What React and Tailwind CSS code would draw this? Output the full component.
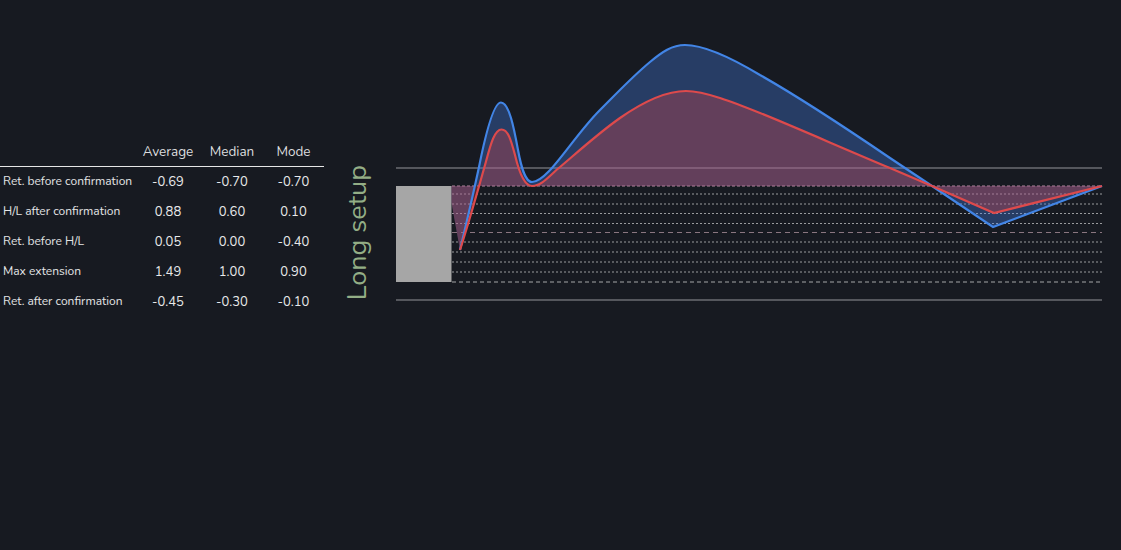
const rows = [
  ["Ret. before confirmation", "-0.69", "-0.70", "-0.70"],
  ["H/L after confirmation", "0.88", "0.60", "0.10"],
  ["Ret. before H/L", "0.05", "0.00", "-0.40"],
  ["Max extension", "1.49", "1.00", "0.90"],
  ["Ret. after confirmation", "-0.45", "-0.30", "-0.10"],
];

const blueCurve =
  "C466 225 473 195 479 167 C484 142 493 102.5 501 102.5 C509 102.5 514 128 518 150 C521 166 525 182 532 182 C548 182 572 138 600 110 C617 93 633 76 650 62 C662 52 672 45 685 45 C705 45 735 60 760 75 C790 92 840 124 890 158 L932 186 L993 227 L1102 186";
const redCurve =
  "C468 225 478 190 485 165 C490 147 494 129.5 501.5 129.5 C508 129.5 511 140 515 155 C519 172 524 186 532 186 C542 186 550 175 560 167 C580 150 600 132 620 118 C640 104 665 91 686 91 C705 91 735 103 760 113 C790 125 840 147 890 168 L932 186 L994 213 L1102 186";

const dotted = [194, 204, 213.5, 223.5, 242, 252, 262, 272];

function Chart() {
  return (
    <svg width="725" height="300" viewBox="390 30 725 300" className="block">
      <line x1="396" x2="1102" y1="168" y2="168" stroke="#6b6d72" strokeWidth="1.5" />
      <line x1="396" x2="1102" y1="300" y2="300" stroke="#6b6d72" strokeWidth="1.5" />
      {dotted.map((y) => (
        <line key={y} x1="452" x2="1102" y1={y} y2={y} stroke="#9a9b9e" strokeWidth="1" strokeDasharray="2 2" />
      ))}
      <line x1="452" x2="1102" y1="186" y2="186" stroke="#b48aa0" strokeWidth="1" strokeDasharray="3 2" />
      <line x1="452" x2="1102" y1="232.5" y2="232.5" stroke="#8a7680" strokeWidth="1" strokeDasharray="5 4" />
      <line x1="452" x2="1102" y1="282" y2="282" stroke="#a5a6a8" strokeWidth="1" strokeDasharray="4 3" />
      <rect x="396" y="186" width="55.5" height="96" fill="#a6a6a6" />
      <path d={`M451.5 186 L451.5 203 L460 250 ${blueCurve} Z`} fill="#4a85f0" fillOpacity="0.33" />
      <path d={`M451.5 186 L451.5 203 L460 250 ${redCurve} Z`} fill="#ef4444" fillOpacity="0.3" />
      <path d={`M460 250 ${blueCurve}`} fill="none" stroke="#4285e6" strokeWidth="2.2" />
      <path d={`M460 250 ${redCurve}`} fill="none" stroke="#dd4a4c" strokeWidth="2.2" />
    </svg>
  );
}

export default function App() {
  return (
    <div className="w-[1121px] h-[550px] overflow-hidden bg-[#171a21] flex items-start font-['Nunito','Lato','Open_Sans',sans-serif]">
      <div className="w-[324px] mt-[136px]">
        <div className="grid grid-cols-[135px_66px_62px_61px] h-[31px] pt-[2px] items-center border-b border-[#e6e6e6] text-[13.5px] text-[#dcdddf] text-center">
          <span></span>
          <span>Average</span>
          <span>Median</span>
          <span>Mode</span>
        </div>
        {rows.map((row) => (
          <div key={row[0]} className="grid grid-cols-[135px_66px_62px_61px] h-[30px] pt-[1px] items-center text-[13px] text-[#e8e9ea] text-center">
            <span className="text-[12px] text-left pl-[3px] mb-[3px] whitespace-nowrap text-[#e4e5e6]">{row[0]}</span>
            <span>{row[1]}</span>
            <span>{row[2]}</span>
            <span>{row[3]}</span>
          </div>
        ))}
      </div>
      <div className="w-[66px] h-[134px] mt-[166px] flex items-center justify-center">
        <span className="[writing-mode:vertical-rl] rotate-180 text-[27px] leading-none text-[#93ae86] whitespace-nowrap">
          Long setup
        </span>
      </div>
      <div className="mt-[30px]">
        <Chart />
      </div>
    </div>
  );
}
